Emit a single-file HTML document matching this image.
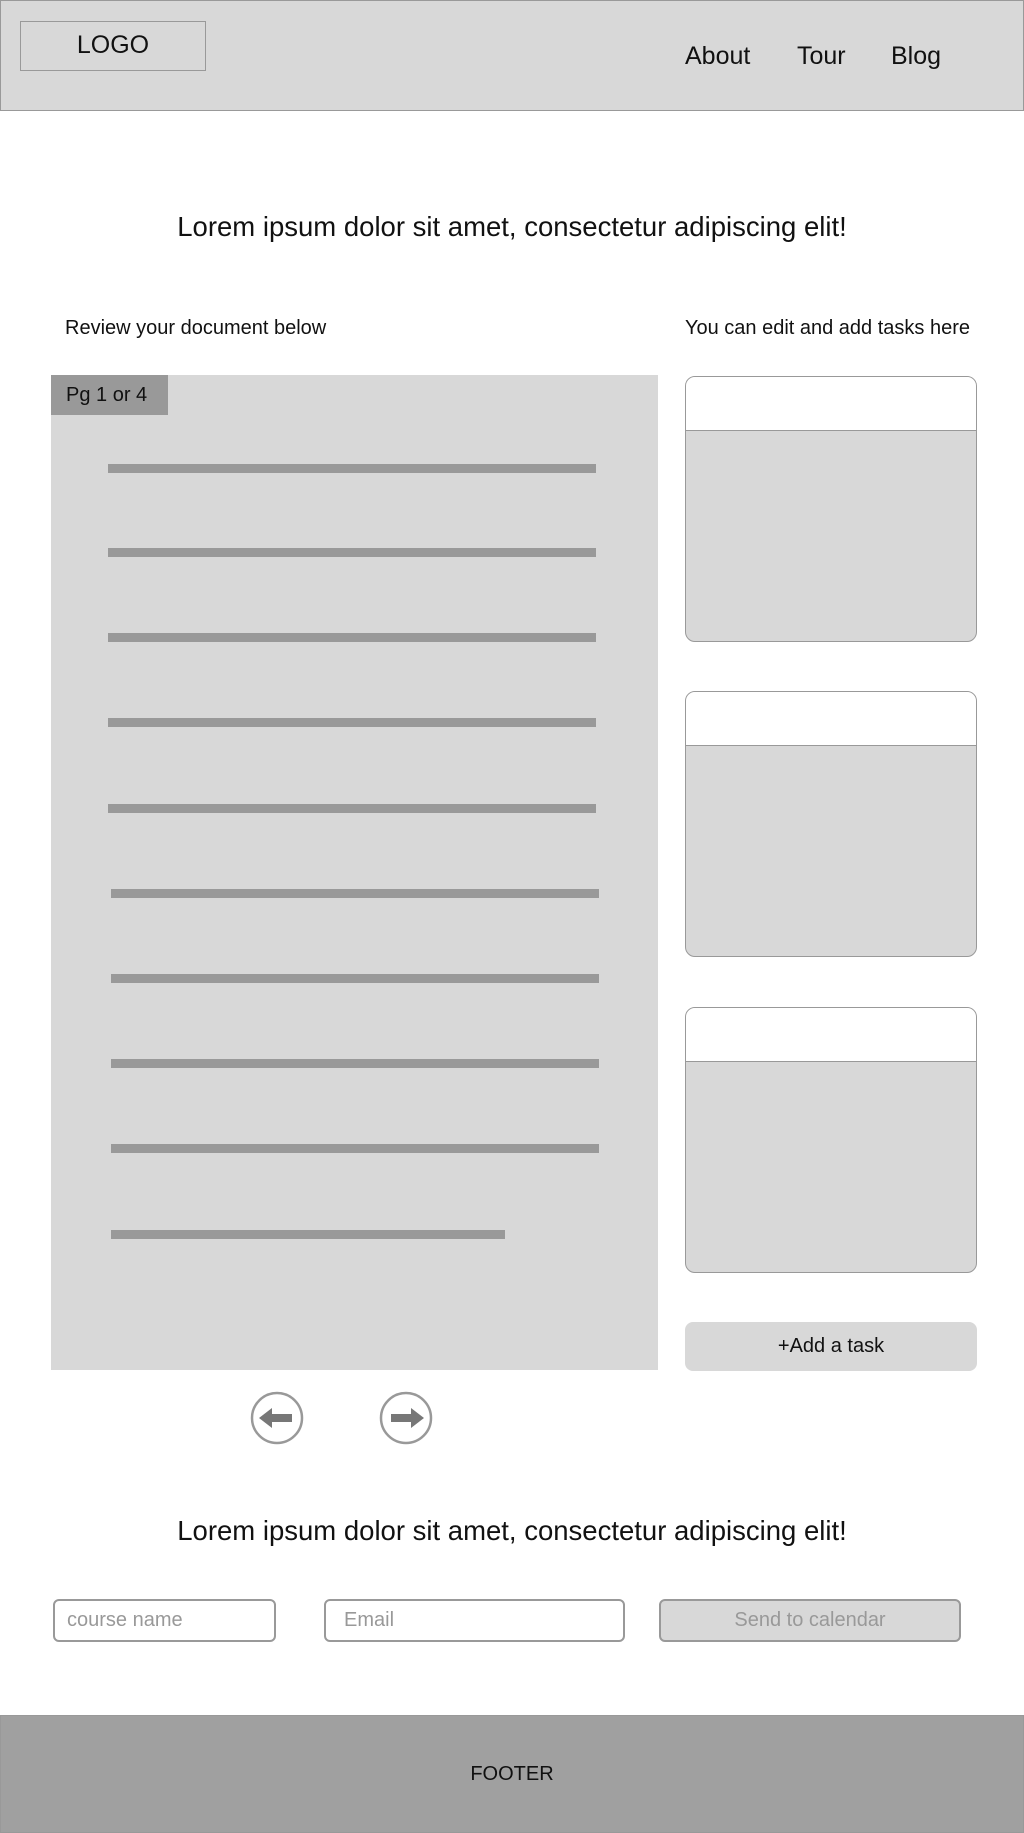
<!DOCTYPE html>
<html><head><style>
body{margin:0;width:1024px;height:1832px;position:relative;background:#fff;font-family:"Liberation Sans",sans-serif;color:#111;overflow:hidden}
.a{position:absolute}
.line{position:absolute;height:9px;background:#999}
.card{position:absolute;left:685px;width:290px;border:1px solid #999;border-radius:10px;background:#d8d8d8;overflow:hidden}
.card div{height:53px;background:#fff;border-bottom:1px solid #999}
.inp{position:absolute;top:1599px;height:43px;border:2px solid #999;border-radius:6px;box-sizing:border-box;font-size:20px;color:#999;line-height:39px}
</style></head><body>
<div class="a" style="left:0;top:0;width:1022px;height:109px;background:#d8d8d8;border:1px solid #999"></div>
<div class="a" style="left:20px;top:21px;width:184px;height:48px;border:1px solid #999;text-align:center;line-height:46px;font-size:25px">LOGO</div>
<div class="a" style="left:685px;top:42px;font-size:25px">About</div>
<div class="a" style="left:797px;top:42px;font-size:25px">Tour</div>
<div class="a" style="left:891px;top:42px;font-size:25px">Blog</div>
<div class="a" style="left:0;width:1024px;top:211px;text-align:center;font-size:27.5px">Lorem ipsum dolor sit amet, consectetur adipiscing elit!</div>
<div class="a" style="left:65px;top:317px;font-size:20px">Review your document below</div>
<div class="a" style="right:54px;top:317px;font-size:20px">You can edit and add tasks here</div>
<div class="a" style="left:51px;top:375px;width:607px;height:995px;background:#d8d8d8"></div>
<div class="a" style="left:51px;top:375px;width:117px;height:40px;background:#999;font-size:20px;line-height:40px;text-indent:15px">Pg 1 or 4</div>
<div class="line" style="left:108px;width:488px;top:464px"></div>
<div class="line" style="left:108px;width:488px;top:548px"></div>
<div class="line" style="left:108px;width:488px;top:633px"></div>
<div class="line" style="left:108px;width:488px;top:718px"></div>
<div class="line" style="left:108px;width:488px;top:804px"></div>
<div class="line" style="left:111px;width:488px;top:889px"></div>
<div class="line" style="left:111px;width:488px;top:974px"></div>
<div class="line" style="left:111px;width:488px;top:1059px"></div>
<div class="line" style="left:111px;width:488px;top:1144px"></div>
<div class="line" style="left:111px;width:394px;top:1230px"></div>
<div class="card" style="top:376px;height:264px"><div></div></div>
<div class="card" style="top:691px;height:264px"><div></div></div>
<div class="card" style="top:1007px;height:264px"><div></div></div>
<div class="a" style="left:685px;top:1322px;width:292px;height:49px;background:#d8d8d8;border-radius:8px;text-align:center;line-height:49px;font-size:20px">+Add a task</div>
<svg class="a" style="left:0;top:1388px" width="500" height="60">
<circle cx="277" cy="30" r="25" fill="#fff" stroke="#999" stroke-width="2.5"/>
<path d="M259 30 L272 20 L272 26 L292 26 L292 34 L272 34 L272 40 Z" fill="#777"/>
<circle cx="406" cy="30" r="25" fill="#fff" stroke="#999" stroke-width="2.5"/>
<path d="M424 30 L411 20 L411 26 L391 26 L391 34 L411 34 L411 40 Z" fill="#777"/>
</svg>
<div class="a" style="left:0;width:1024px;top:1515px;text-align:center;font-size:27.5px">Lorem ipsum dolor sit amet, consectetur adipiscing elit!</div>
<div class="inp" style="left:53px;width:223px;padding-left:12px">course name</div>
<div class="inp" style="left:324px;width:301px;padding-left:18px">Email</div>
<div class="inp" style="left:659px;width:302px;background:#d8d8d8;text-align:center">Send to calendar</div>
<div class="a" style="left:0;top:1715px;width:1022px;height:116px;background:#a0a0a0;border:1px solid #999;text-align:center;line-height:116px;font-size:20px">FOOTER</div>
</body></html>
